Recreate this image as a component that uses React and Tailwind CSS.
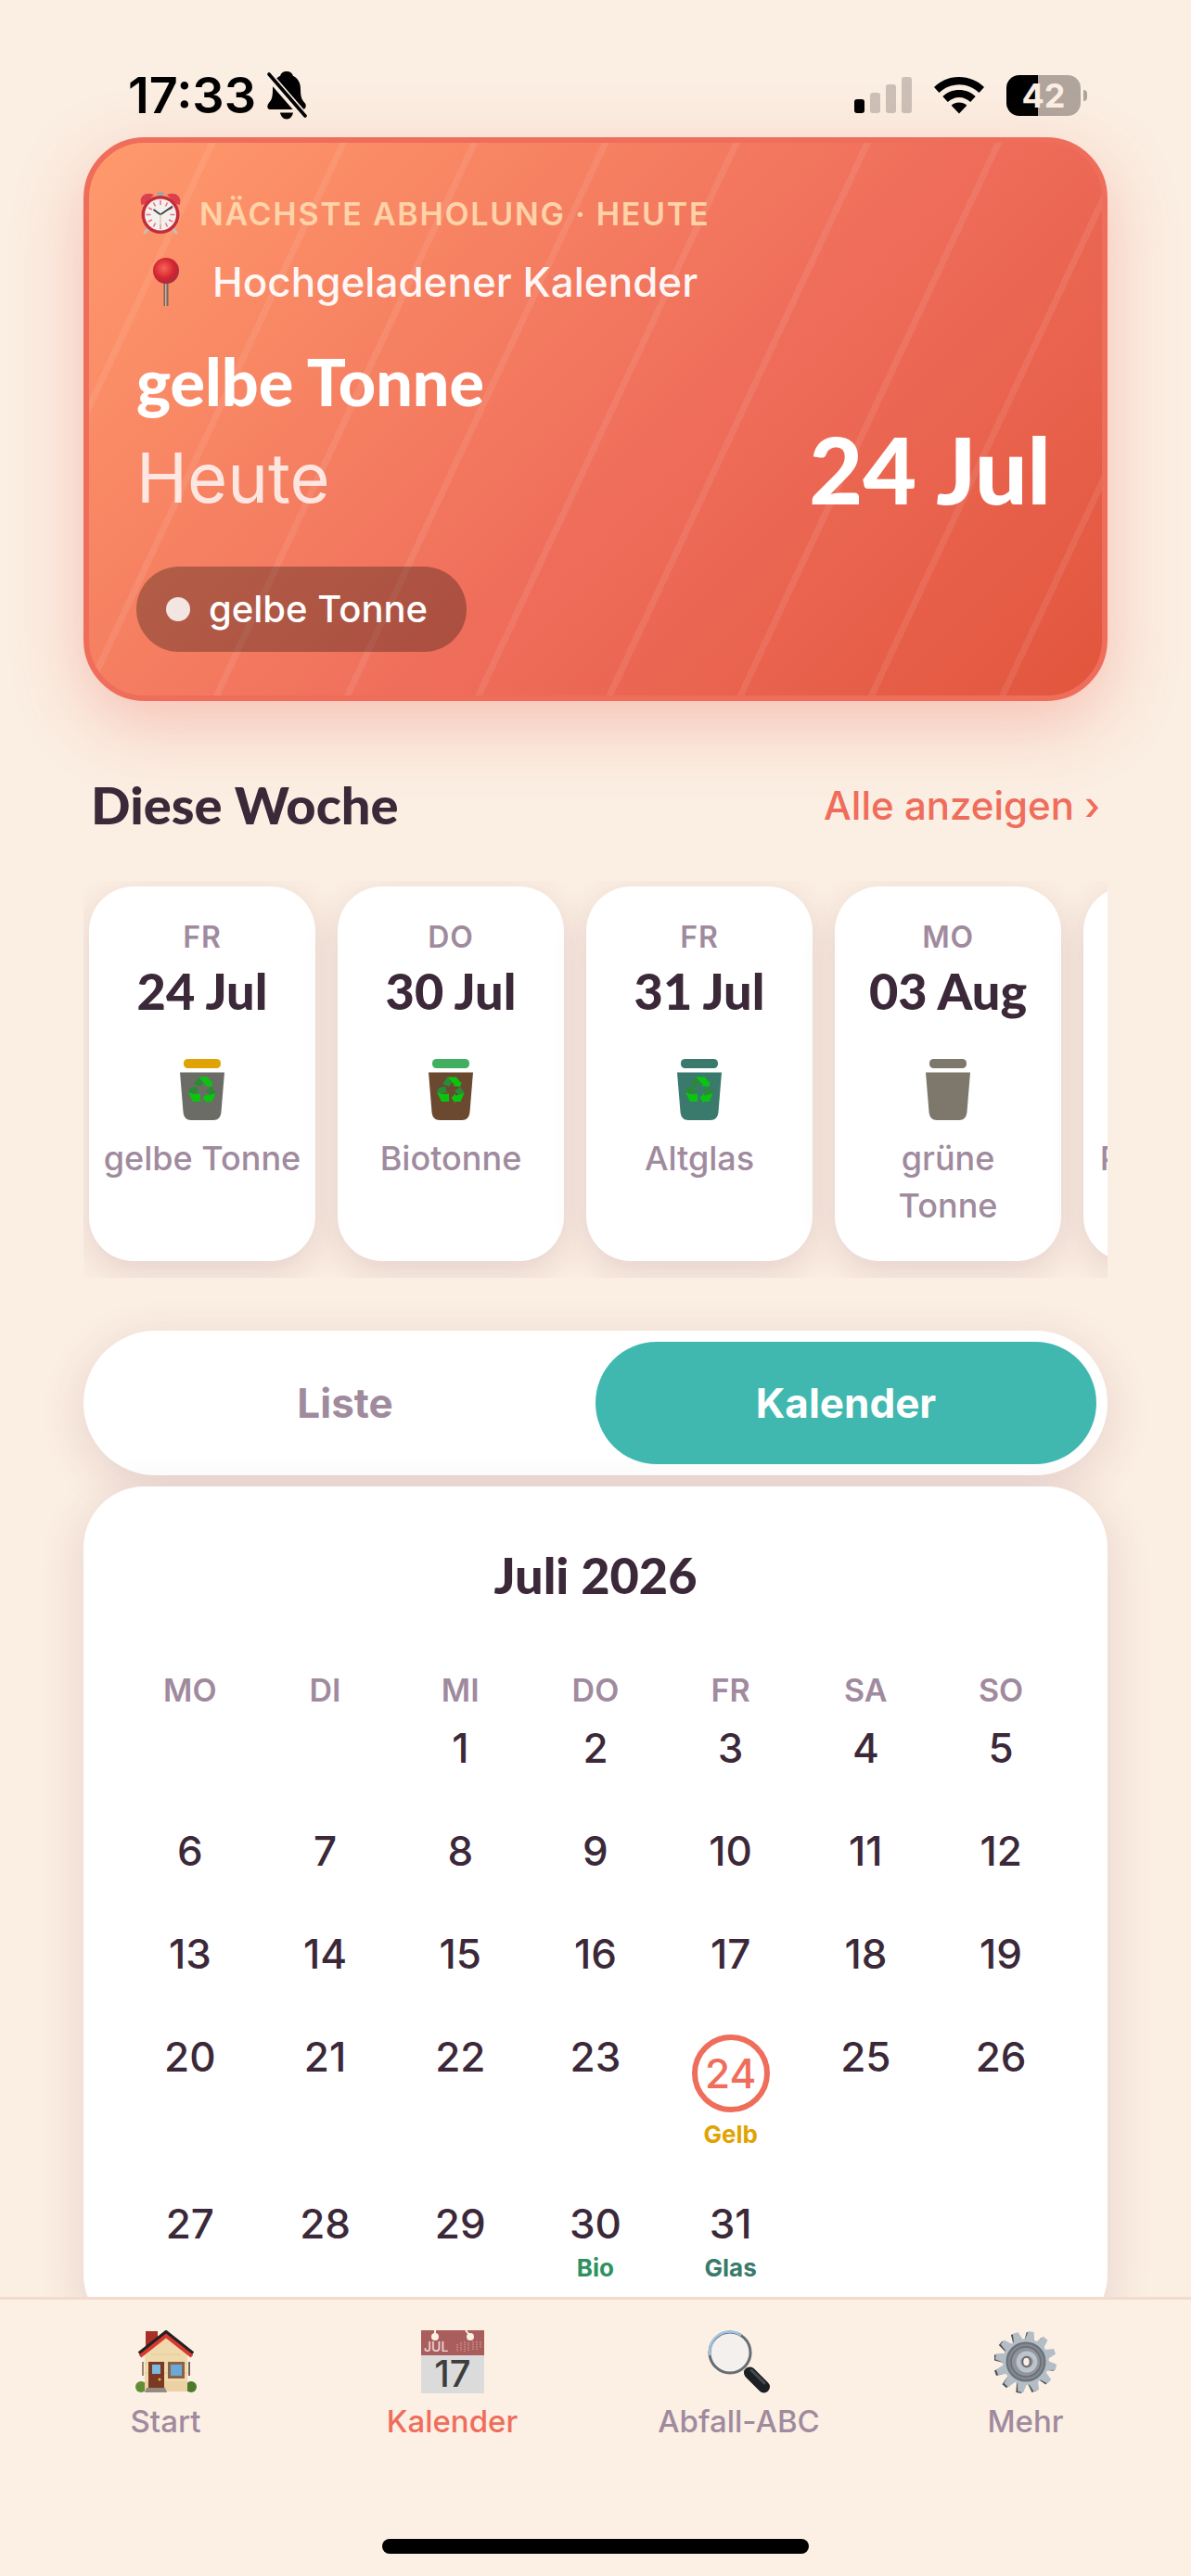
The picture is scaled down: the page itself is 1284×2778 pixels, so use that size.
import React, { useState } from 'react';

const WEEK = [
  { day: 'FR', date: '24 Jul', label: 'gelbe Tonne', lid: '#dfa404', body: '#6b6c66', recycle: true },
  { day: 'DO', date: '30 Jul', label: 'Biotonne', lid: '#41af5f', body: '#6b4830', recycle: true },
  { day: 'FR', date: '31 Jul', label: 'Altglas', lid: '#3a7a6c', body: '#3a7a6c', recycle: true },
  { day: 'MO', date: '03 Aug', label: 'grüne\nTonne', lid: '#7d776c', body: '#7d776c', recycle: false },
  { day: 'DO', date: '06 Aug', label: 'Papiertonne', lid: '#3f74b5', body: '#3f74b5', recycle: true },
];

const WEEKDAYS = ['MO', 'DI', 'MI', 'DO', 'FR', 'SA', 'SO'];

const MONTH = [
  [null, null, 1, 2, 3, 4, 5],
  [6, 7, 8, 9, 10, 11, 12],
  [13, 14, 15, 16, 17, 18, 19],
  [20, 21, 22, 23, 24, 25, 26],
  [27, 28, 29, 30, 31, null, null],
];

const TODAY = 24;

const PICKUPS = {
  24: { label: 'Gelb', color: 'text-[#dfa404]' },
  30: { label: 'Bio', color: 'text-[#2f9160]' },
  31: { label: 'Glas', color: 'text-[#3a7a6c]' },
};

const BellOffIcon = () => (
  <svg viewBox="0 0 43 52" className="h-[52px] w-[43px]" aria-hidden="true">
    <path d="M21 0c3.600 0 6.200 2 6.800 4.700C33 7 36 12 36 19c0 9 1.500 11.500 5 15.500 1.500 2 .8 6.500-2.500 6.500H3C0 41-.5 37 1.500 34.500 5 30.500 6 28 6 19 6 12 9 7 14.200 4.700 14.800 2 17.400 0 21 0z" />
    <path d="M14 44.500h14c-.8 4.200-3.500 7-7 7s-6.200-2.800-7-7z" />
    <path d="M-2 0L44 53" stroke="#fbeee2" strokeWidth="9" />
    <path d="M2 3l39 45" stroke="#000" strokeWidth="3.600" strokeLinecap="round" />
  </svg>
);

const SignalIcon = () => (
  <svg viewBox="0 0 62 40" className="h-10 w-[62px]" aria-hidden="true">
    <rect x="0" y="24" width="11" height="15" rx="3" />
    <rect x="17" y="17" width="11" height="22" rx="3" fill="#cbc0b7" />
    <rect x="34" y="8" width="11" height="31" rx="3" fill="#cbc0b7" />
    <rect x="51" y="0" width="11" height="39" rx="3" fill="#cbc0b7" />
  </svg>
);

const WifiIcon = () => (
  <svg viewBox="0 0 54 40" className="h-10 w-[54px]" aria-hidden="true">
    <path d="M27 0c10.500 0 20 4 27 11l-5.500 6C42.500 11.300 35 8.200 27 8.200S11.500 11.300 5.500 17L0 11C7 4 16.500 0 27 0z" />
    <path d="M27 14c6.800 0 13 2.600 17.700 7l-5.500 6C36 24 31.700 22 27 22s-9 2-12.200 5l-5.500-6C14 16.600 20.200 14 27 14z" />
    <path d="M27 27.500c3.200 0 6 1.200 8.300 3.200L27 39.500l-8.300-8.800c2.300-2 5.100-3.200 8.300-3.200z" />
  </svg>
);

const AlarmClockIcon = () => (
  <svg viewBox="0 0 44 46" className="h-[46px] w-11" aria-hidden="true">
    <path d="M9 39l-4 5M35 39l4 5" stroke="#c9bbb6" strokeWidth="3" strokeLinecap="round" />
    <path d="M1.500 14C-2 5 6-1 15 3L5 13zM42.500 14C46 5 38-1 29 3l10 10z" fill="#dc3f4d" />
    <rect x="18" y="0" width="8" height="4" rx="2" fill="#a4a5a6" />
    <circle cx="22" cy="24.500" r="20.500" fill="#c32c38" />
    <circle cx="22" cy="24.500" r="17" fill="#f2f1ef" />
    <path
      d="M22 9v5M22 35v5M6.500 24.500h5M32.500 24.500h5M14.500 11.500l2 4M29.500 11.500l-2 4M9 17l4 2M35 17l-4 2M9 32l4-2M35 32l-4-2M14.500 37.500l2-4M29.500 37.500l-2-4"
      stroke="#ee6f74"
      strokeWidth="1.500"
    />
    <path d="M14.500 19l7.500 5.500 13-9" stroke="#3c3c3c" strokeWidth="1.800" fill="none" />
    <path d="M22 24v15" stroke="#d9c39a" strokeWidth="1.200" />
  </svg>
);

const PinIcon = () => (
  <svg viewBox="0 0 28 52" className="h-[52px] w-7" aria-hidden="true">
    <defs>
      <radialGradient id="pin-head" cx="0.42" cy="0.4" r="0.65">
        <stop offset="0" stopColor="#f8645a" />
        <stop offset="0.6" stopColor="#d5252f" />
        <stop offset="1" stopColor="#a32c46" />
      </radialGradient>
    </defs>
    <rect x="11.500" y="24" width="5" height="28" fill="#7d6459" />
    <rect x="13" y="24" width="1.500" height="28" fill="#c9b1a4" />
    <circle cx="14" cy="14" r="14" fill="url(#pin-head)" />
  </svg>
);

const BinIcon = ({ lid, body, recycle }) => (
  <svg viewBox="0 0 48 66" className="h-[66px] w-12" aria-hidden="true">
    <rect x="4" y="0" width="40" height="10" rx="4.500" fill={lid} />
    <path d="M0 14.500h48L44.500 57c-.5 6-3.500 9-8.500 9H12c-5 0-8-3-8.500-9z" fill={body} />
    {recycle && (
      <g>
        <path d="M20 19.500h10l4.500 6 1.500-1-2 5.500-8-1 2-1.200z" fill="#0bc40f" />
        <path d="M20 19.500l5 6-3 4.500-7-3z" fill="#2a8a35" />
        <path d="M11 31l7-1.500L20 37l-3-.8-2 1.800-6-2z" fill="#2a8a35" />
        <path d="M9 36l6 2 7-.5V46h-8z" fill="#0bc40f" />
        <path d="M28 34.500l6-4.500 4.500 6-.5 3-5 .5z" fill="#2a8a35" />
        <path d="M38.500 37L34.500 46H29v1.800L24.500 42l4.500-5v2.500z" fill="#0bc40f" />
      </g>
    )}
  </svg>
);

const HouseIcon = () => (
  <svg viewBox="0 0 66 68" className="h-[68px] w-[66px]" aria-hidden="true">
    <rect x="11" y="1" width="13" height="22" fill="#a92f27" />
    <path d="M10 26L33 4l23 22v40H10z" fill="#f0d9ad" />
    <path d="M10 36h46M10 46h46M10 56h46M17 26h32" stroke="#e3c998" strokeWidth="1" />
    <path d="M4 25L33 2l29 23" stroke="#222" strokeWidth="4" fill="none" />
    <path d="M5 28L33 6l28 22" stroke="#d8382f" strokeWidth="4" fill="none" />
    <rect x="7" y="34" width="2" height="15" fill="#a18571" />
    <rect x="57" y="34" width="2" height="15" fill="#7b6353" />
    <circle cx="6" cy="61" r="6" fill="#5f8f35" />
    <circle cx="60" cy="61" r="6" fill="#4c7a2b" />
    <rect x="10" y="56" width="46" height="10" fill="#ecd2a2" />
    <rect x="14" y="34" width="17" height="29" fill="#7b3822" />
    <rect x="18" y="37" width="9" height="10" fill="#7db9de" />
    <circle cx="26" cy="53" r="1.500" fill="#f0b53a" />
    <rect x="35" y="34" width="18" height="18" fill="#8b6245" />
    <rect x="38" y="37" width="12" height="12" fill="#6ba9d8" />
    <path d="M12 62h20l2 5H10z" fill="#948a7d" />
  </svg>
);

const CalendarIcon = () => (
  <svg viewBox="0 0 68 68" className="h-[68px] w-[68px]" aria-hidden="true">
    <rect width="68" height="68" fill="#dbdbdb" />
    <rect width="68" height="27" fill="#aa5d5d" />
    <circle cx="15" cy="7" r="4" fill="#fbeee2" />
    <circle cx="53" cy="7" r="4" fill="#fbeee2" />
    <path d="M15 0v6M48 0l4 5" stroke="#fbeee2" strokeWidth="2" />
    <path
      d="M39 15v8M43 13v10M47 12v11M51 13v10M56 12v9M60 12v9M64 12v7"
      stroke="#c98f8d"
      strokeWidth="1.500"
      strokeDasharray="1.500 1"
    />
    <text x="3" y="23" fontFamily="Inter, sans-serif" fontSize="14" fill="#ecdada">JUL</text>
    <text x="34" y="61" textAnchor="middle" fontFamily="Inter, sans-serif" fontSize="40" fontWeight="500" fill="#3d3d3d">17</text>
  </svg>
);

const MagnifierIcon = () => (
  <svg viewBox="0 0 68 68" className="h-[68px] w-[68px]" aria-hidden="true">
    <path d="M40 42l4 4" stroke="#8a8e92" strokeWidth="5" />
    <path d="M45.500 46l15 15" stroke="#1d2023" strokeWidth="13" strokeLinecap="round" />
    <path d="M47 43l14 14" stroke="#474c50" strokeWidth="3" strokeLinecap="round" />
    <circle cx="24" cy="24" r="22" fill="#f3f0ed" stroke="#666d73" strokeWidth="3" />
    <path d="M2.500 27A21.500 21.500 0 0 1 36 5.500" stroke="#9fc4e6" strokeWidth="2.500" fill="none" />
  </svg>
);

const TEETH = [0, 30, 60, 90, 120, 150, 180, 210, 240, 270, 300, 330];

const GearIcon = () => (
  <svg viewBox="0 0 68 68" className="h-[68px] w-[68px]" aria-hidden="true">
    <g fill="#4d5254" transform="translate(-2 1)">
      {TEETH.map((a) => (
        <path key={a} d="M30 12l1-11h6l1 11z" transform={`rotate(${a + 10} 34 34)`} />
      ))}
    </g>
    <g fill="#b4bdc6">
      {TEETH.map((a) => (
        <path key={a} d="M28.500 12l2.500-11h6l2.500 11z" transform={`rotate(${a + 10} 34 34)`} />
      ))}
    </g>
    <circle cx="34" cy="34" r="25" fill="#b4bdc6" />
    <circle cx="34" cy="34" r="20.500" fill="#7f8890" stroke="#6a7178" strokeWidth="2" />
    <circle cx="34" cy="34" r="16" fill="#8d969f" stroke="#6f6a6e" strokeWidth="1.500" />
    <circle cx="35" cy="34" r="9" fill="#8b8589" stroke="#bcc4cc" strokeWidth="5" />
    <ellipse cx="34.500" cy="34" rx="4" ry="5" fill="#fbeee2" stroke="#5d666e" strokeWidth="1.500" />
  </svg>
);

const StatusBar = () => (
  <div className="flex h-[148px] shrink-0 items-end justify-between pr-[112px] pb-[18px] pl-[138px]">
    <div className="flex h-[54px] items-center gap-3">
      <span className="text-[54px] leading-[54px] font-semibold text-black">17:33</span>
      <BellOffIcon />
    </div>
    <div className="flex h-[54px] items-center gap-6">
      <SignalIcon />
      <WifiIcon />
      <div className="flex items-center gap-[3px]">
        <span className="flex h-11 w-20 items-center justify-center rounded-[14px] bg-linear-to-r from-black from-43% to-[#b0a59d] to-43% text-[36px] leading-none font-bold text-[#fbeee2]">
          42
        </span>
        <span className="h-3 w-1 rounded-r-full bg-[#b0a59d]" />
      </div>
    </div>
  </div>
);

const NextPickupCard = () => (
  <section className="relative rounded-[66px] border-6 border-[#ef6d5b] bg-linear-135 from-[#ff9a6c] via-[#ef6e5b] via-55% to-[#e2553d] px-[51px] pt-[45px] pb-[47px] shadow-[0_24px_72px_rgba(239,109,91,0.35)]">
    <div className="absolute inset-0 rounded-[60px] bg-[repeating-linear-gradient(115deg,transparent_0_117px,rgba(255,255,255,0.08)_117px_124px,transparent_124px_128px)]" />
    <div className="relative">
      <div className="flex h-[62px] items-center gap-5 pl-1">
        <AlarmClockIcon />
        <h2 className="text-[34px] font-semibold tracking-wider text-[#ffd2a8]">NÄCHSTE ABHOLUNG · HEUTE</h2>
      </div>
      <div className="mt-3 flex h-[62px] items-center gap-9 pl-[18px]">
        <PinIcon />
        <p className="text-[44px] font-medium text-white/95">Hochgeladener Kalender</p>
      </div>
      <div className="mt-7 flex items-end justify-between">
        <div>
          <p className="font-[Lato] text-[70px] leading-[96px] font-black text-white">gelbe Tonne</p>
          <p className="text-[74px] leading-[112px] text-white/80">Heute</p>
        </div>
        <p className="pr-1 pb-1.5 font-[Lato] text-[100px] leading-[120px] font-black text-white">24 Jul</p>
      </div>
      <div className="mt-10 flex h-23 w-fit items-center gap-5 rounded-[46px] bg-black/28 pr-[42px] pl-8">
        <span className="size-[26px] rounded-full bg-[#f3e5e2]" />
        <span className="text-[40px] font-medium text-white">gelbe Tonne</span>
      </div>
    </div>
  </section>
);

const WeekStrip = () => (
  <section className="mt-[70px]">
    <div className="flex h-[84px] items-center justify-between px-2">
      <h2 className="font-[Lato] text-[56px] font-black text-[#3b2838]">Diese Woche</h2>
      <a href="#alle" className="text-[42px] font-medium text-[#ef6d5b]">Alle anzeigen ›</a>
    </div>
    <ul className="mt-10 flex gap-6 overflow-x-auto px-1.5 pt-1.5 pb-[18px] [scrollbar-width:none]">
      {WEEK.map((item) => (
        <li
          key={item.date}
          className="flex h-[404px] w-[244px] shrink-0 flex-col items-center rounded-[48px] bg-white px-2 pt-[34px] text-center shadow-[0_12px_36px_rgba(120,60,90,0.16)]"
        >
          <span className="text-[32px] leading-[42px] font-semibold tracking-wide text-[#a08a9e]">{item.day}</span>
          <span className="mt-1 font-[Lato] text-[54px] leading-[66px] font-black whitespace-nowrap text-[#3b2838]">
            {item.date}
          </span>
          <span className="mt-10">
            <BinIcon lid={item.lid} body={item.body} recycle={item.recycle} />
          </span>
          <span className="mt-4 text-[36px] leading-[51px] font-medium whitespace-pre-line text-[#a08a9e]">
            {item.label}
          </span>
        </li>
      ))}
    </ul>
  </section>
);

const ViewSwitch = ({ view, onChange }) => (
  <div className="mt-[57px] flex h-[156px] rounded-[78px] bg-white p-3 shadow-[0_12px_48px_rgba(120,60,90,0.16)]">
    {['Liste', 'Kalender'].map((name) => (
      <button
        key={name}
        onClick={() => onChange(name)}
        className={
          view === name
            ? 'flex-1 cursor-pointer rounded-[66px] bg-[#40b8b0] text-[44px] font-bold text-white'
            : 'flex-1 cursor-pointer rounded-[66px] text-[44px] font-bold text-[#a08a9e]'
        }
      >
        {name}
      </button>
    ))}
  </div>
);

const DayCell = ({ day }) => {
  if (!day) return <td />;
  const pickup = PICKUPS[day];

  return (
    <td className="p-0 align-top">
      <div className="flex min-h-[111px] flex-col items-center pt-1.5">
        {day === TODAY ? (
          <span className="flex size-[84px] items-center justify-center rounded-full border-6 border-[#ef6d5b] text-[44px] leading-none font-medium text-[#ef6d5b]">
            {day}
          </span>
        ) : (
          <span className="text-[44px] leading-[48px] font-medium text-[#3b2838]">{day}</span>
        )}
        {pickup && (
          <span className={`mt-1.5 text-[26px] leading-[36px] font-bold ${pickup.color}`}>{pickup.label}</span>
        )}
        {day === TODAY && <span className="h-12" />}
      </div>
    </td>
  );
};

const MonthCard = () => (
  <section className="mt-3 rounded-[66px] bg-white px-[42px] pt-[54px] pb-10 shadow-[0_12px_48px_rgba(120,60,90,0.16)]">
    <h2 className="text-center font-[Lato] text-[54px] leading-[84px] font-black text-[#3b2838]">Juli 2026</h2>
    <table className="mt-12 w-full table-fixed">
      <thead>
        <tr>
          {WEEKDAYS.map((name) => (
            <th key={name} className="h-[66px] p-0 text-[34px] font-semibold text-[#a08a9e]">{name}</th>
          ))}
        </tr>
      </thead>
      <tbody>
        {MONTH.map((week, i) => (
          <tr key={i}>
            {week.map((day, j) => (
              <DayCell key={j} day={day} />
            ))}
          </tr>
        ))}
      </tbody>
    </table>
  </section>
);

const TABS = [
  { label: 'Start', Icon: HouseIcon },
  { label: 'Kalender', Icon: CalendarIcon },
  { label: 'Abfall-ABC', Icon: MagnifierIcon },
  { label: 'Mehr', Icon: GearIcon },
];

const TabBar = ({ active }) => (
  <nav className="relative shrink-0 border-t-3 border-[#f2dacc] bg-[#fcefe4] px-6 pt-[33px] pb-6">
    <div className="grid grid-cols-4">
      {TABS.map(({ label, Icon }) => (
        <a
          key={label}
          href={`#${label}`}
          className={
            label === active
              ? 'flex flex-col items-center gap-1.5 text-[33px] leading-[48px] font-medium text-[#ef6d5b]'
              : 'flex flex-col items-center gap-1.5 text-[33px] leading-[48px] font-medium text-[#a08a9e]'
          }
        >
          <Icon />
          {label}
        </a>
      ))}
    </div>
    <div className="mx-auto mt-[103px] h-4 w-[460px] rounded-full bg-black" />
  </nav>
);

const App = () => {
  const [view, setView] = useState('Kalender');

  return (
    <div className="flex h-screen flex-col bg-[#fbeee2] font-['Inter',sans-serif]">
      <div className="flex min-h-0 flex-1 flex-col overflow-y-auto [scrollbar-width:none]">
        <StatusBar />
        <main className="px-[90px]">
          <NextPickupCard />
          <WeekStrip />
          <ViewSwitch view={view} onChange={setView} />
          <MonthCard />
        </main>
      </div>
      <TabBar active="Kalender" />
    </div>
  );
};

export default App;
